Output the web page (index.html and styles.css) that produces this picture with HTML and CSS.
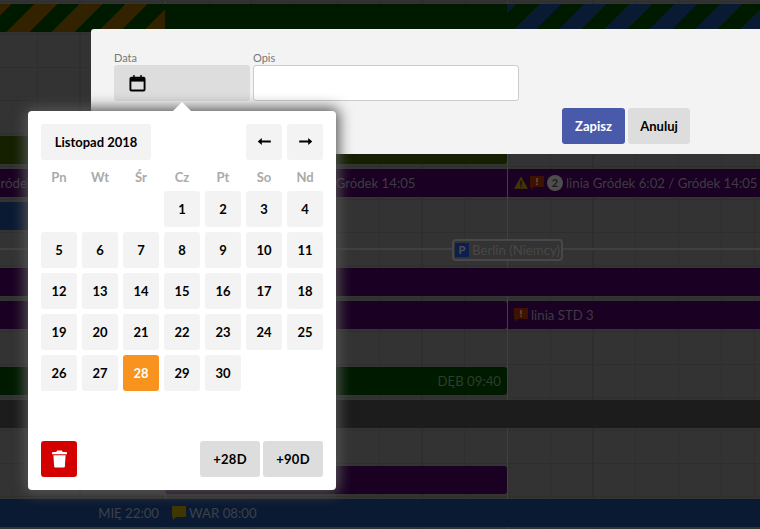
FILE: index.html
```html
<!DOCTYPE html>
<html lang="pl">
<head>
    <meta charset="UTF-8">
    <title>Grafik</title>
    <link rel="stylesheet" href="styles.css">
</head>
<body>
    <div class="schedule">
        <div class="row">
            <div class="bar stripes-orange"></div>
            <div class="bar green"></div>
            <div class="bar stripes-blue"></div>
        </div>
        <div class="row"></div>
        <div class="row"></div>
        <div class="row"></div>
        <div class="row">
            <div class="bar olive wide"></div>
        </div>
        <div class="row">
            <div class="bar purple"><span class="clip">Gródek 6:02</span></div>
            <div class="bar purple">
                <svg class="ico warn" width="14" height="13" viewBox="0 0 16 14"><path d="M8 0l8 14H0z" fill="#403700"/><path d="M7.200 5h1.600v5H7.200zM7.200 11h1.600v1.500H7.200z" fill="#1a0022"/></svg>
                <svg class="ico" width="14" height="14" viewBox="0 0 14 14"><path d="M0 0h14v11H4l-3 3v-3H0z" fill="#3d1200"/><path d="M6.200 2h1.600v4.500H6.200zM6.200 7.500h1.600V9H6.200z" fill="#5c4c44"/></svg>
                <span class="count">2</span>
                <span>linia Gródek 6:02 / Gródek 14:05</span>
            </div>
            <div class="bar purple after">
                <svg class="ico warn" width="14" height="13" viewBox="0 0 16 14"><path d="M8 0l8 14H0z" fill="#403700"/><path d="M7.200 5h1.600v5H7.200zM7.200 11h1.600v1.500H7.200z" fill="#1a0022"/></svg>
                <svg class="ico" width="14" height="14" viewBox="0 0 14 14"><path d="M0 0h14v11H4l-3 3v-3H0z" fill="#3d1200"/><path d="M6.200 2h1.600v4.500H6.200zM6.200 7.500h1.600V9H6.200z" fill="#5c4c44"/></svg>
                <span class="count">2</span>
                <span>linia Gródek 6:02 / Gródek 14:05</span>
            </div>
        </div>
        <div class="row">
            <div class="bar blue"></div>
        </div>
        <div class="row route">
            <div class="stop"><span class="stop-icon">P</span>Berlin (Niemcy)</div>
        </div>
        <div class="row">
            <div class="bar purple full"></div>
        </div>
        <div class="row">
            <div class="bar purple wide"></div>
            <div class="bar purple after">
                <svg class="ico" width="14" height="14" viewBox="0 0 14 14"><path d="M0 0h14v11H4l-3 3v-3H0z" fill="#3d1200"/><path d="M6.200 2h1.600v4.500H6.200zM6.200 7.500h1.600V9H6.200z" fill="#5c4c44"/></svg>
                <span>linia STD 3</span>
            </div>
        </div>
        <div class="row"></div>
        <div class="row">
            <div class="bar green wide end"><span>DĘB 09:40</span></div>
        </div>
        <div class="row">
            <div class="bar dark full"></div>
        </div>
        <div class="row"></div>
        <div class="row">
            <div class="bar purple second"></div>
        </div>
        <div class="row">
            <div class="bar blue end"><span>MIĘ 22:00</span></div>
            <div class="bar blue rest">
                <svg class="ico" width="14" height="14" viewBox="0 0 14 14"><path d="M1 0h12a1 1 0 011 1v9a1 1 0 01-1 1H4l-3 3v-3a1 1 0 01-1-1V1a1 1 0 011-1z" fill="#403700"/></svg>
                <span>WAR 08:00</span>
            </div>
        </div>
    </div>

    <div class="dialog">
        <div class="fields">
            <div class="field">
                <label>Data</label>
                <button class="date-btn">
                    <svg width="17" height="18" viewBox="0 0 18 18"><path d="M2.500 3.500h13a1 1 0 011 1v11.500a1 1 0 01-1 1h-13a1 1 0 01-1-1V4.500a1 1 0 011-1z" fill="none" stroke="#000" stroke-width="2"/><path d="M1.500 4h15v3.500h-15z" fill="#000"/><path d="M4.500 0.500h1.500v4H4.500zM12 0.500h1.500v4H12z" fill="#000"/></svg>
                </button>
            </div>
            <div class="field">
                <label>Opis</label>
                <input class="text-input" type="text">
            </div>
        </div>
        <div class="actions">
            <button class="btn btn-primary">Zapisz</button>
            <button class="btn">Anuluj</button>
        </div>
    </div>

    <div class="picker">
        <div class="picker-head">
            <button class="cell month">Listopad 2018</button>
            <div class="arrows">
                <button class="cell"><svg width="15" height="9" viewBox="0 0 16 10"><path d="M15 4h-10V1L0.500 5 5 9V6h10z" fill="#000"/></svg></button>
                <button class="cell"><svg width="15" height="9" viewBox="0 0 16 10"><path d="M1 4h10V1l4.500 4L11 9V6H1z" fill="#000"/></svg></button>
            </div>
        </div>
        <div class="days">
            <span class="wd">Pn</span><span class="wd">Wt</span><span class="wd">Śr</span><span class="wd">Cz</span><span class="wd">Pt</span><span class="wd">So</span><span class="wd">Nd</span>
            <span class="cell first">1</span><span class="cell">2</span><span class="cell">3</span><span class="cell">4</span>
            <span class="cell">5</span><span class="cell">6</span><span class="cell">7</span><span class="cell">8</span><span class="cell">9</span><span class="cell">10</span><span class="cell">11</span>
            <span class="cell">12</span><span class="cell">13</span><span class="cell">14</span><span class="cell">15</span><span class="cell">16</span><span class="cell">17</span><span class="cell">18</span>
            <span class="cell">19</span><span class="cell">20</span><span class="cell">21</span><span class="cell">22</span><span class="cell">23</span><span class="cell">24</span><span class="cell">25</span>
            <span class="cell">26</span><span class="cell">27</span><span class="cell active">28</span><span class="cell">29</span><span class="cell">30</span>
        </div>
        <div class="picker-foot">
            <button class="trash">
                <svg width="15" height="18" viewBox="0 0 16 18"><path d="M5.500 0h5l1 1.500H15a1 1 0 011 1V4H0V2.500a1 1 0 011-1h3.500zM1.500 5h13l-.8 12a1 1 0 01-1 1H3.300a1 1 0 01-1-1z" fill="#fff"/></svg>
            </button>
            <div class="shortcuts">
                <button class="btn-plus">+28D</button>
                <button class="btn-plus">+90D</button>
            </div>
        </div>
    </div>
</body>
</html>
```

FILE: styles.css
```css
* {
    margin: 0;
    padding: 0;
    box-sizing: border-box;
}

html, body {
    height: 529px;
    overflow: hidden;
}

body {
    font-family: Lato, "Open Sans", sans-serif;
    background: #333;
    position: relative;
}

button {
    font-family: inherit;
    border: none;
}

/* dimmed schedule behind the dialog */
.schedule {
    padding-top: 1px;
    height: 529px;
    background-image:
        repeating-linear-gradient(90deg, #2e2e2e 0, #2e2e2e 1px, transparent 1px, transparent 42.75px);
    background-position: -6px 0;
}

.row {
    height: 33px;
    padding: 2px 0;
    border-top: 1px solid #2e2e2e;
    display: grid;
    grid-template-columns: 165px 342px 253px;
    position: relative;
}

.row::before,
.row::after {
    content: "";
    position: absolute;
    top: -1px;
    bottom: -1px;
    width: 1px;
    background: #404040;
}

.row::before {
    left: 165px;
}

.row::after {
    left: 507px;
}

.bar {
    height: 28px;
    display: flex;
    align-items: center;
    padding: 0 7px 1px;
    font-size: 13.2px;
    color: #3f3b46;
    overflow: hidden;
    white-space: nowrap;
    position: relative;
    z-index: 1;
}

.bar.after {
    grid-column: 3;
    margin-left: 1px;
    padding-left: 6px;
}

.bar.wide {
    grid-column: 1 / 3;
    border-radius: 0 3px 3px 0;
}

.bar.full {
    grid-column: 1 / 4;
}

.bar.second {
    grid-column: 2;
    border-radius: 3px;
}

.bar.rest {
    grid-column: 2 / 4;
}

.bar.end {
    justify-content: flex-end;
    padding-right: 6px;
}

.purple { background: #1a0022; }
.green { background: #001a00; color: #2c3e2c; }
.olive { background: #152000; }
.blue { background: #0b1a33; color: #3c414c; }
.dark { background: #1c1c1c; }

.stripes-orange {
    background: repeating-linear-gradient(-45deg, #332200 0, #332200 16px, #001a00 16px, #001a00 32px);
}

.stripes-blue {
    background: repeating-linear-gradient(-45deg, #0b1a33 0, #0b1a33 16px, #001a00 16px, #001a00 32px);
}

.clip {
    margin-left: -16px;
}

.ico {
    flex: none;
    margin-right: 3px;
}

.ico.warn {
    margin-right: 2px;
}

.count {
    width: 16px;
    height: 16px;
    border-radius: 50%;
    background: #4d4d4d;
    color: #1c1c1c;
    font-size: 11px;
    font-weight: 700;
    display: flex;
    align-items: center;
    justify-content: center;
    margin-right: 3px;
    flex: none;
}

.route {
    background: linear-gradient(#404040, #404040) 0 15px / 100% 2px no-repeat;
}

.stop {
    grid-column: 1 / 4;
    justify-self: start;
    margin: 4px 0 0 452px;
    height: 22px;
    width: 111px;
    border: 2px solid #484848;
    border-radius: 4px;
    background: #333;
    color: #484848;
    font-size: 13.2px;
    display: flex;
    align-items: center;
    white-space: nowrap;
    padding-left: 1px;
    z-index: 1;
}

.stop-icon {
    width: 14px;
    height: 14px;
    background: #0a1f4d;
    color: #4d4d4d;
    font-size: 11px;
    font-weight: 900;
    text-align: center;
    line-height: 14px;
    margin-right: 3px;
    flex: none;
}

/* dialog */
.dialog {
    position: absolute;
    left: 91px;
    top: 29px;
    width: 669px;
    height: 125px;
    background: #f3f3f3;
    border-radius: 3px 0 0 0;
    padding: 22px 70px 0 23px;
    z-index: 2;
}

.fields {
    display: flex;
    gap: 3px;
}

.field label {
    display: block;
    font-size: 11px;
    line-height: 14px;
    color: #777;
}

.date-btn {
    display: flex;
    align-items: center;
    width: 136px;
    height: 36px;
    padding-left: 15px;
    background: #ddd;
    border-radius: 3px;
}

.text-input {
    display: block;
    width: 266px;
    height: 36px;
    background: #fff;
    border: 1px solid #ccc;
    border-radius: 3px;
}

.actions {
    display: flex;
    justify-content: flex-end;
    gap: 3px;
    margin-top: 7px;
}

.btn {
    height: 36px;
    width: 62px;
    background: #ddd;
    color: #000;
    font-size: 13px;
    font-weight: 700;
    border-radius: 3px;
}

.btn-primary {
    width: 63px;
    background: #4a5aab;
    color: #fff;
}

/* date picker */
.picker {
    position: absolute;
    left: 28px;
    top: 111px;
    width: 308px;
    height: 379px;
    padding: 13px;
    background: #fff;
    border-radius: 4px;
    box-shadow: 0 0 14px 3px #555;
    display: flex;
    flex-direction: column;
    z-index: 3;
}

.picker::before {
    content: "";
    position: absolute;
    left: 145px;
    top: -9px;
    border-left: 9px solid transparent;
    border-right: 9px solid transparent;
    border-bottom: 9px solid #fff;
}

.cell {
    width: 36px;
    height: 36px;
    background: #f3f3f3;
    border-radius: 3px;
    color: #000;
    font-size: 13px;
    font-weight: 700;
    display: flex;
    align-items: center;
    justify-content: center;
    padding-bottom: 1px;
}

.picker-head {
    display: flex;
    justify-content: space-between;
}

.month {
    width: 110px;
}

.arrows {
    display: flex;
    gap: 5px;
}

.days {
    display: grid;
    grid-template-columns: repeat(7, 36px);
    grid-auto-rows: 36px;
    gap: 5px;
    grid-template-rows: 26px;
}

.wd {
    align-self: end;
    text-align: center;
    font-size: 13px;
    font-weight: 700;
    color: #aaa;
    line-height: 18px;
}

.first {
    grid-column: 4;
}

.cell.active {
    background: #f7931e;
    color: #fff;
}

.picker-foot {
    margin-top: auto;
    display: flex;
    justify-content: space-between;
}

.trash {
    width: 36px;
    height: 36px;
    background: #d40000;
    border-radius: 3px;
    display: flex;
    align-items: center;
    justify-content: center;
}

.shortcuts {
    display: flex;
    gap: 3px;
}

.btn-plus {
    width: 60px;
    height: 36px;
    background: #ddd;
    color: #000;
    font-size: 13px;
    font-weight: 700;
    letter-spacing: 0.3px;
    border-radius: 3px;
}
```
